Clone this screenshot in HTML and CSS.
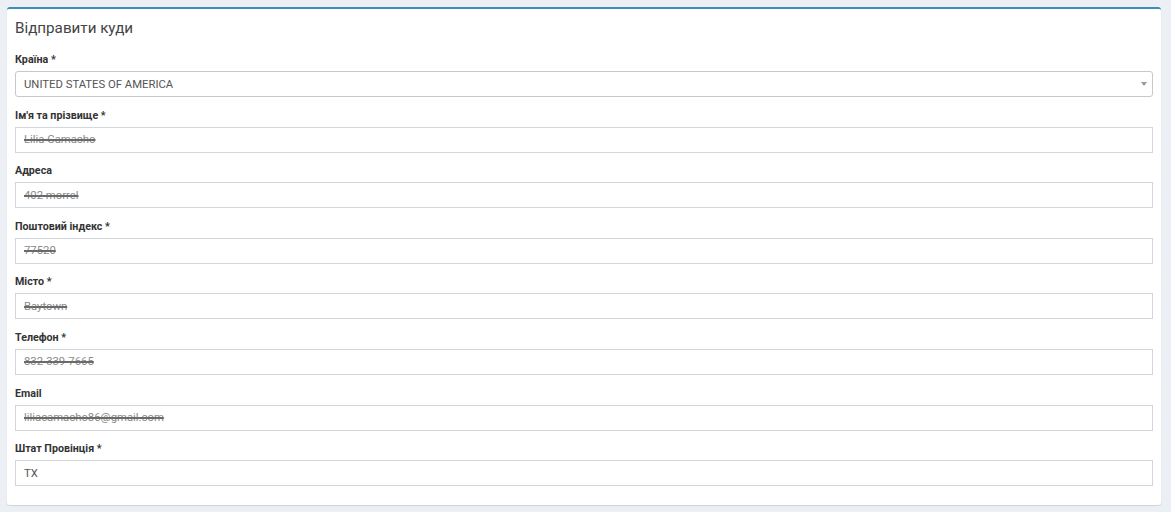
FILE: index.html
```html
<!DOCTYPE html>
<html lang="uk">
<head>
<meta charset="utf-8">
<title>Відправити куди</title>
<link rel="stylesheet" href="styles.css">
</head>
<body>
<div class="page">
  <section class="box">
    <h3 class="box-title">Відправити куди</h3>
    <div class="field">
      <label class="label">Країна *</label>
      <div class="select">
        <span class="value">UNITED STATES OF AMERICA</span>
        <svg class="caret" width="6" height="4" viewBox="0 0 6 4"><path d="M0 0h6L3 4z" fill="#999"/></svg>
      </div>
    </div>
    <div class="field">
      <label class="label">Ім'я та прізвище *</label>
      <div class="input"><span class="redacted">Lilia Camacho</span></div>
    </div>
    <div class="field">
      <label class="label">Адреса</label>
      <div class="input"><span class="redacted">402 morrel </span></div>
    </div>
    <div class="field">
      <label class="label">Поштовий індекс *</label>
      <div class="input"><span class="redacted">77520</span></div>
    </div>
    <div class="field">
      <label class="label">Місто *</label>
      <div class="input"><span class="redacted">Baytown </span></div>
    </div>
    <div class="field">
      <label class="label">Телефон *</label>
      <div class="input"><span class="redacted">832-339-7665</span></div>
    </div>
    <div class="field">
      <label class="label">Email</label>
      <div class="input"><span class="redacted">liliacamacho86@gmail.com</span></div>
    </div>
    <div class="field">
      <label class="label">Штат Провінція *</label>
      <div class="input"><span class="value">TX</span></div>
    </div>
  </section>
</div>
</body>
</html>
```
FILE: styles.css
```css
html, body {
  margin: 0;
  padding: 0;
  background: #ecf0f5;
  font-family: Roboto, "Liberation Sans", Arial, sans-serif;
}
.page {
  padding: 7px 10px 7px 7px;
}
.box {
  background: #fff;
  border-top: 2px solid #3c8dbc;
  border-radius: 3px;
  box-shadow: 0 1px 1px rgba(0,0,0,0.12);
  padding: 9px 8px 19px 8px;
}
.box-title {
  margin: 0 0 14px 0;
  font-size: 15.2px;
  line-height: 20px;
  font-weight: 400;
  color: #444;
}
.field {
  display: flex;
  flex-direction: column;
  margin-bottom: 10.6px;
}
.field:last-child { margin-bottom: 0; }
.label {
  font-size: 10.7px;
  font-weight: 700;
  line-height: 16px;
  color: #333;
  margin-bottom: 3px;
}
.input, .select {
  height: 26px;
  box-sizing: border-box;
  border: 1px solid #d2d6de;
  display: flex;
  align-items: center;
  padding: 0 8px;
  font-size: 11.3px;
  color: #555;
}
.select {
  border-color: #c8c8c8;
  border-radius: 3px;
  justify-content: space-between;
  padding-right: 5px;
}
.value { color: #555; }
.redacted {
  color: #8a8a8a;
  text-decoration: line-through;
  text-decoration-color: #6a6a6a;
  text-decoration-thickness: 2px;
}
.caret { display: block; }
```
